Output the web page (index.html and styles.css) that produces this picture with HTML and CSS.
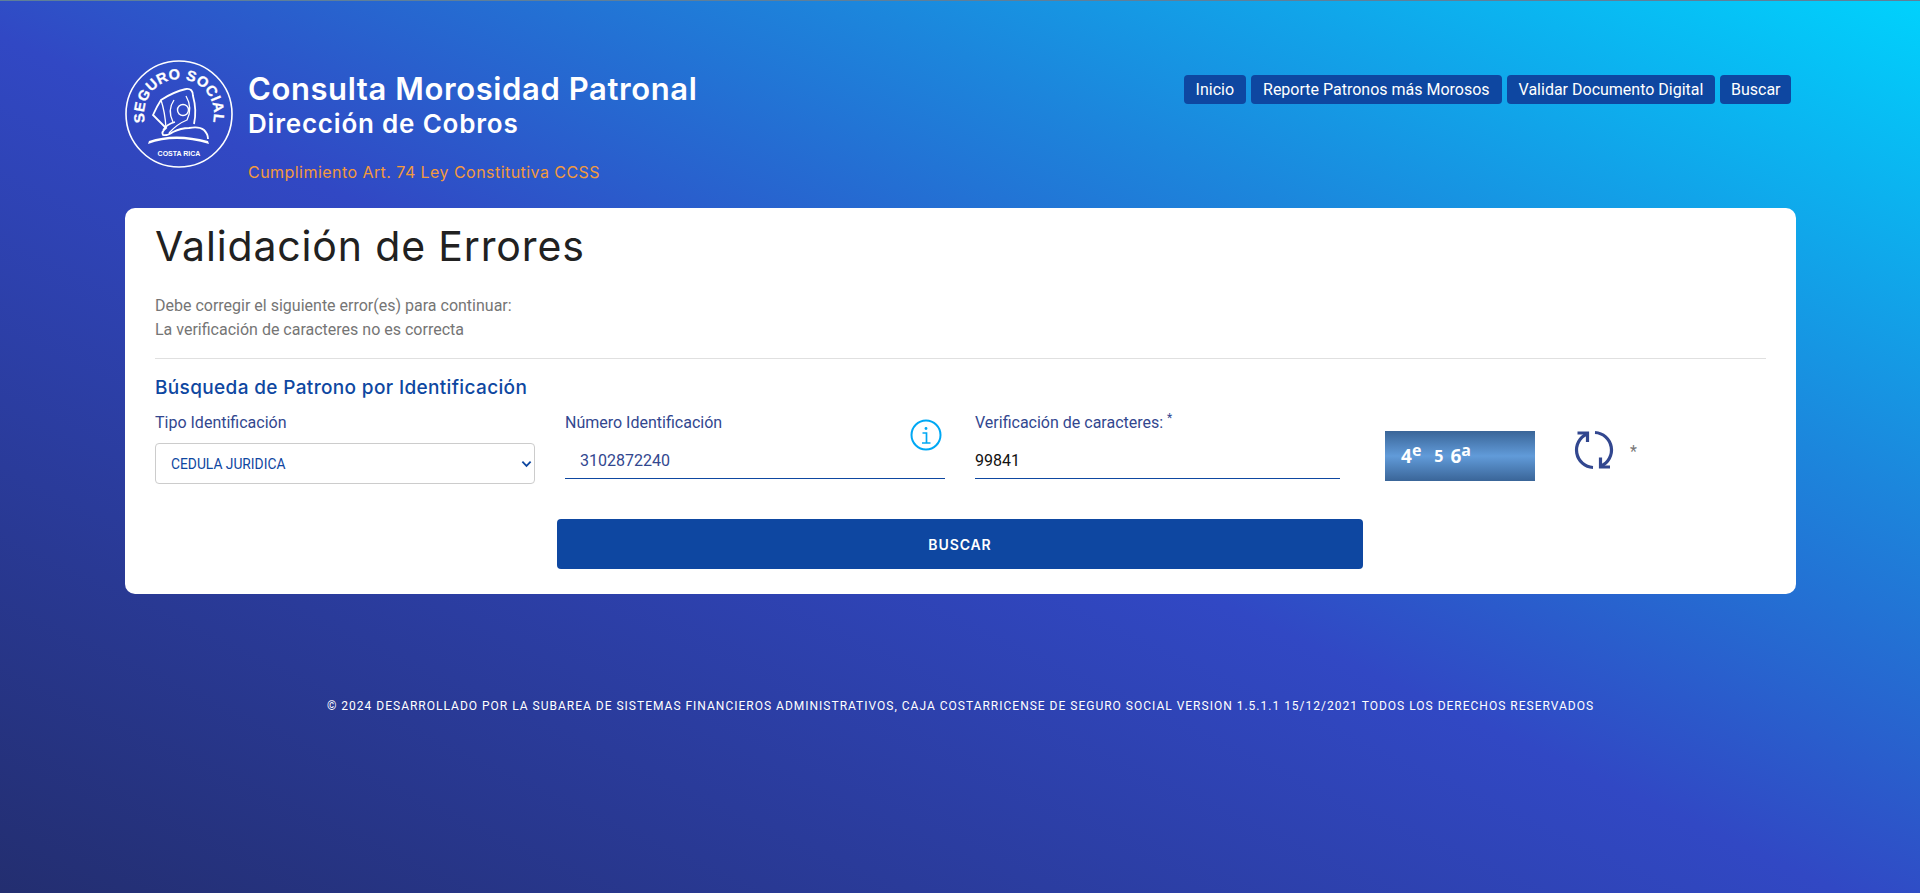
FILE: index.html
```html
<!DOCTYPE html>
<html lang="es">

<head>
    <meta charset="UTF-8">
    <meta name="viewport" content="width=device-width, initial-scale=1.0">
    <title>Consulta Morosidad Patronal</title>
    <link rel="stylesheet" href="styles.css">
</head>

<body>
    <div class="page">
        <header class="top">
            <div class="brand">
                <svg class="logo" viewBox="0 0 108 108" fill="none" stroke="#fff">
                    <defs>
                        <path id="arcoLogo" d="M23.7 71.5 A35 35 0 1 1 84.3 71.5"></path>
                    </defs>
                    <circle cx="54" cy="54" r="53" stroke-width="1.6"></circle>
                    <text class="logo-arc"><textPath href="#arcoLogo" startOffset="50%" text-anchor="middle">SEGURO SOCIAL</textPath></text>
                    <path d="M61 29 Q48 32 36 40 Q32 46 28 55 L41 68 Q36 72 38 75 Q42 76 48 72 Q56 68 64 68 Q74 66 79 70 Q83 74 83 79" stroke-width="1.8"></path>
                    <path d="M61 29 Q68 28 68 36 Q72 50 69 64" stroke-width="1.8"></path>
                    <path d="M49 40 Q42 50 48 62 M36 40 Q40 52 41 68" stroke-width="1.3"></path>
                    <circle cx="58" cy="50" r="5.5" stroke-width="1.4"></circle>
                    <path d="M61 36 Q68 48 62 60 Q52 64 44 73 M38 70 Q42 64 50 62" stroke-width="1.3"></path>
                    <path d="M23 84 Q50 74 84 84 L83 81 Q50 72 24 81 Z" fill="#fff" stroke="none"></path>
                    <text class="logo-pais" x="54" y="96" text-anchor="middle">COSTA RICA</text>
                </svg>
                <div class="brand-text">
                    <h1>Consulta Morosidad Patronal</h1>
                    <h2>Dirección de Cobros</h2>
                    <p>Cumplimiento Art. 74 Ley Constitutiva CCSS</p>
                </div>
            </div>
            <nav class="menu">
                <a href="#">Inicio</a>
                <a href="#">Reporte Patronos más Morosos</a>
                <a href="#">Validar Documento Digital</a>
                <a href="#">Buscar</a>
            </nav>
        </header>

        <main class="card">
            <h3 class="title">Validación de Errores</h3>
            <div class="errors">
                <p>Debe corregir el siguiente error(es) para continuar:</p>
                <p>La verificación de caracteres no es correcta</p>
            </div>
            <hr>
            <h4 class="subtitle">Búsqueda de Patrono por Identificación</h4>

            <form class="fields">
                <div class="field field-tipo">
                    <label>Tipo Identificación</label>
                    <div class="select">
                        <span>CEDULA JURIDICA</span>
                        <svg viewBox="0 0 12 8" fill="none" stroke="#0e47a1" stroke-width="2"><path d="M1.5 1.5 L6 6 L10.5 1.5"></path></svg>
                    </div>
                </div>
                <div class="field field-numero">
                    <div class="label-row">
                        <label>Número Identificación</label>
                        <svg class="info" viewBox="0 0 32 32" fill="none" stroke="#00a8f4" stroke-width="2">
                            <circle cx="16" cy="16" r="14.5"></circle>
                            <circle cx="16" cy="9.5" r="1.4" fill="#00a8f4" stroke="none"></circle>
                            <path d="M12.5 14 H16.5 V23.5 M12 24 H20.5" stroke-width="1.7"></path>
                        </svg>
                    </div>
                    <div class="input">3102872240</div>
                </div>
                <div class="field field-codigo">
                    <label>Verificación de caracteres: <sup>*</sup></label>
                    <div class="input input-dark">99841</div>
                </div>
                <div class="captcha"><span>4<sup>e</sup></span><span class="c5">5</span><span>6<sup>a</sup></span></div>
                <svg class="refresh" viewBox="0 0 40 40" fill="none" stroke="#32478f" stroke-width="3.2">
                    <path d="M13 4 A17.5 17.5 0 0 0 19 37.5"></path>
                    <path d="M3.5 3 H13.5 V12"></path>
                    <path d="M21 2.5 A17.5 17.5 0 0 1 27 36"></path>
                    <path d="M36 37 H26.5 V27.5"></path>
                </svg>
                <span class="star">*</span>
            </form>

            <div class="actions">
                <button type="button" class="btn">BUSCAR</button>
            </div>
        </main>

        <footer class="foot">© 2024 DESARROLLADO POR LA SUBAREA DE SISTEMAS FINANCIEROS ADMINISTRATIVOS, CAJA COSTARRICENSE DE SEGURO SOCIAL VERSION 1.5.1.1 15/12/2021 TODOS LOS DERECHOS RESERVADOS</footer>
    </div>
</body>

</html>
```

FILE: styles.css
```css
* {
    margin: 0;
    padding: 0;
    box-sizing: border-box;
}

html,
body {
    height: 100%;
}

body {
    font-family: Roboto, "Liberation Sans", sans-serif;
    font-size: 16px;
    background: linear-gradient(to top right, #232e70 0%, #3148c4 48%, #1c86dc 72%, #00d2fd 100%);
    border-top: 1px solid #5f7f99;
    overflow: hidden;
}

.page {
    width: 1671px;
    margin-left: 125px;
    padding-top: 59px;
}

/* cabecera */
.top {
    display: flex;
    justify-content: space-between;
    align-items: flex-start;
    height: 148px;
}

.brand {
    display: flex;
    gap: 15px;
}

.logo {
    width: 108px;
    height: 108px;
    flex: none;
}

.logo-arc {
    font: bold 14.5px "Liberation Sans", sans-serif;
    letter-spacing: 0.4px;
    fill: #fff;
    stroke: #fff;
    stroke-width: 0.3px;
}

.logo-pais {
    font: bold 7px "Liberation Sans", sans-serif;
    fill: #fff;
    stroke: none;
}

.brand-text {
    color: #fff;
    font-family: Inter, "Liberation Sans", sans-serif;
    padding-top: 11px;
}

.brand-text h1 {
    font-size: 31px;
    font-weight: 600;
    line-height: 36px;
    letter-spacing: 0.6px;
}

.brand-text h2 {
    font-size: 26px;
    font-weight: 600;
    line-height: 34px;
    letter-spacing: 0.8px;
}

.brand-text p {
    margin-top: 20px;
    font-size: 16px;
    line-height: 22px;
    letter-spacing: 0.45px;
    color: #f39a3c;
}

.menu {
    display: flex;
    gap: 5px;
    margin: 15px 5px 0 0;
}

.menu a {
    display: block;
    height: 29px;
    padding: 0 12px;
    line-height: 29px;
    color: #fff;
    font-size: 16px;
    text-decoration: none;
    background-color: #0e47a1;
    border-radius: 4px;
}

.menu a:last-child {
    padding: 0 10.5px;
}

/* tarjeta */
.card {
    height: 386px;
    padding: 14px 30px 0;
    background-color: #fff;
    border-radius: 10px;
}

.title {
    font-family: Inter, "Liberation Sans", sans-serif;
    font-size: 41px;
    font-weight: 400;
    line-height: 48px;
    letter-spacing: 0.85px;
    color: #212121;
}

.errors {
    margin-top: 24px;
    color: #757575;
    line-height: 24px;
}

.card hr {
    margin-top: 16px;
    border: 0;
    border-top: 1px solid #e0e0e0;
}

.subtitle {
    margin-top: 18px;
    font-family: Inter, "Liberation Sans", sans-serif;
    font-size: 19px;
    font-weight: 500;
    line-height: 22px;
    letter-spacing: 0.35px;
    color: #0e47a1;
}

.fields {
    display: flex;
    align-items: flex-start;
    margin-top: 13px;
}

.field {
    display: flex;
    flex-direction: column;
    flex: none;
    color: #32478f;
}

.field label {
    line-height: 22px;
}

.field sup {
    font-size: 12px;
    line-height: 0;
}

.field-tipo {
    width: 380px;
    margin-right: 30px;
}

.field-numero {
    width: 380px;
    margin-right: 30px;
}

.field-codigo {
    width: 365px;
    margin-right: 45px;
}

.select {
    display: flex;
    justify-content: space-between;
    align-items: center;
    height: 41px;
    margin-top: 9px;
    padding: 0 2px 0 15px;
    font-size: 13.8px;
    color: #0e47a1;
    border: 1px solid #ccc;
    border-radius: 4px;
}

.select svg {
    width: 11px;
    height: 8px;
}

.label-row {
    display: flex;
    justify-content: space-between;
}

.info {
    width: 32px;
    height: 32px;
    margin: 7px 3px 0 0;
}

.input {
    height: 35px;
    margin-top: -7px;
    padding-left: 15px;
    line-height: 33px;
    border-bottom: 1.5px solid #0e47a1;
}

.input-dark {
    margin-top: 10px;
    padding-left: 0;
    color: #111;
}

.captcha {
    display: flex;
    align-items: center;
    gap: 7px;
    flex: none;
    width: 150px;
    height: 50px;
    margin-top: 19px;
    padding-left: 16px;
    color: #fff;
    font: bold 19px "Open Sans", "Liberation Sans", sans-serif;
    background: linear-gradient(#3a6598, #619bd9 50%, #3a6598);
}

.captcha sup {
    font-size: 16px;
    line-height: 0;
}

.captcha .c5 {
    margin-left: 6px;
    font-size: 16px;
}

.refresh {
    flex: none;
    width: 40px;
    height: 40px;
    margin: 18px 0 0 39px;
}

.star {
    margin: 30px 0 0 16px;
    color: #777;
}

.actions {
    display: flex;
    justify-content: center;
    margin-top: 35px;
}

.btn {
    width: 806px;
    height: 50px;
    margin-left: -1px;
    color: #fff;
    font: 600 14px Inter, "Liberation Sans", sans-serif;
    letter-spacing: 0.9px;
    background-color: #0e47a1;
    border: 0;
    border-radius: 4px;
}

/* pie */
.foot {
    margin-top: 105px;
    text-align: center;
    color: #fff;
    font-size: 12px;
    letter-spacing: 1px;
}
```
